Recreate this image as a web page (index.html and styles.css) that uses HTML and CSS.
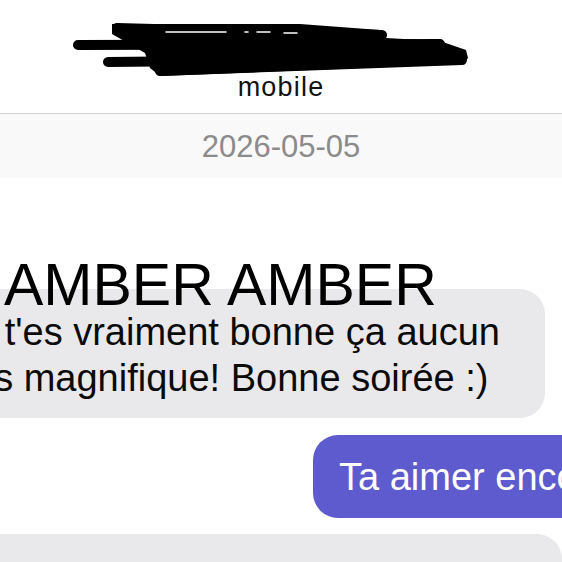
FILE: index.html
```html
<!DOCTYPE html>
<html>

<head>
    <title>Messages</title>
    <link rel="stylesheet" href="styles.css">
</head>
<body>
    <div class="phone">
        <div class="contact">
            <svg class="scribble" width="562" height="80" viewBox="0 0 562 80">
                <path d="M112 24 L300 24 L380 30 L386 38 L440 41 L466 50 L468 58 L463 64 L160 76 L150 68 L145 53 L112 34 Z" fill="#000"/>
                <g stroke="#000" stroke-linecap="round" fill="none" stroke-width="10">
                    <path d="M117 28 L382 35"/>
                    <path d="M78 45 L440 44"/>
                    <path d="M108 62 L300 60"/>
                    <path d="M160 71 L462 60"/>
                </g>
                <g stroke="#fff" stroke-linecap="round" stroke-width="1.5">
                    <path d="M166 32 L226 32"/>
                    <path d="M245 32 L248 32"/>
                    <path d="M257 32 L270 32"/>
                    <path d="M284 33 L297 33"/>
                </g>
            </svg>
            <div class="contact-type">mobile</div>
        </div>
        <div class="date-bar">2026-05-05</div>

        <div class="thread">
            <h1 class="caption">AMBER AMBER</h1>
            <div class="bubble bubble-in">
                n t'es vraiment bonne ça aucun<br>
                es magnifique! Bonne soirée :)
            </div>
            <div class="bubble bubble-out">Ta aimer encore</div>
            <div class="bubble bubble-in bubble-next">&nbsp;</div>
        </div>
    </div>
</body>

</html>
```

FILE: styles.css
```css
body {
    margin: 0;
    background: #fff;
    font-family: "Liberation Sans", Arial, Helvetica, sans-serif;
}

.phone {
    width: 562px;
    height: 562px;
    overflow: hidden;
}

/* header with the hidden contact name */
.contact {
    display: flex;
    flex-direction: column;
    align-items: center;
    padding-bottom: 12px;
    border-bottom: 1px solid #d2d2d2;
}

.scribble {
    display: block;
}

.contact-type {
    margin-top: -6px;
    font-size: 27px;
    line-height: 27px;
    letter-spacing: 1.2px;
    color: #111;
}

.date-bar {
    background: #f9f9f9;
    color: #8b8b8b;
    font-size: 31px;
    line-height: 62px;
    padding-top: 2px;
    text-align: center;
}

.thread {
    display: flex;
    flex-direction: column;
}

.caption {
    position: relative;
    z-index: 1;
    margin: 78px 0 -25px 0;
    padding-left: 4px;
    font-size: 59px;
    line-height: 58px;
    font-weight: normal;
    color: #000;
    white-space: nowrap;
}

.bubble {
    font-size: 38px;
    border-radius: 25px;
    white-space: nowrap;
}

.bubble-in {
    background: #e9e9eb;
    color: #0b0b0b;
    margin-left: -52px;
    width: 597px;
    padding: 20px 0 17px 25px;
    line-height: 46px;
    box-sizing: border-box;
}

.bubble-out {
    background: #5e5bce;
    color: #fff;
    margin: 17px -120px 0 313px;
    padding: 2px 0 0 26px;
    line-height: 81px;
}

.bubble-next {
    margin-top: 16px;
    width: 614px;
    height: 120px;
}
```
